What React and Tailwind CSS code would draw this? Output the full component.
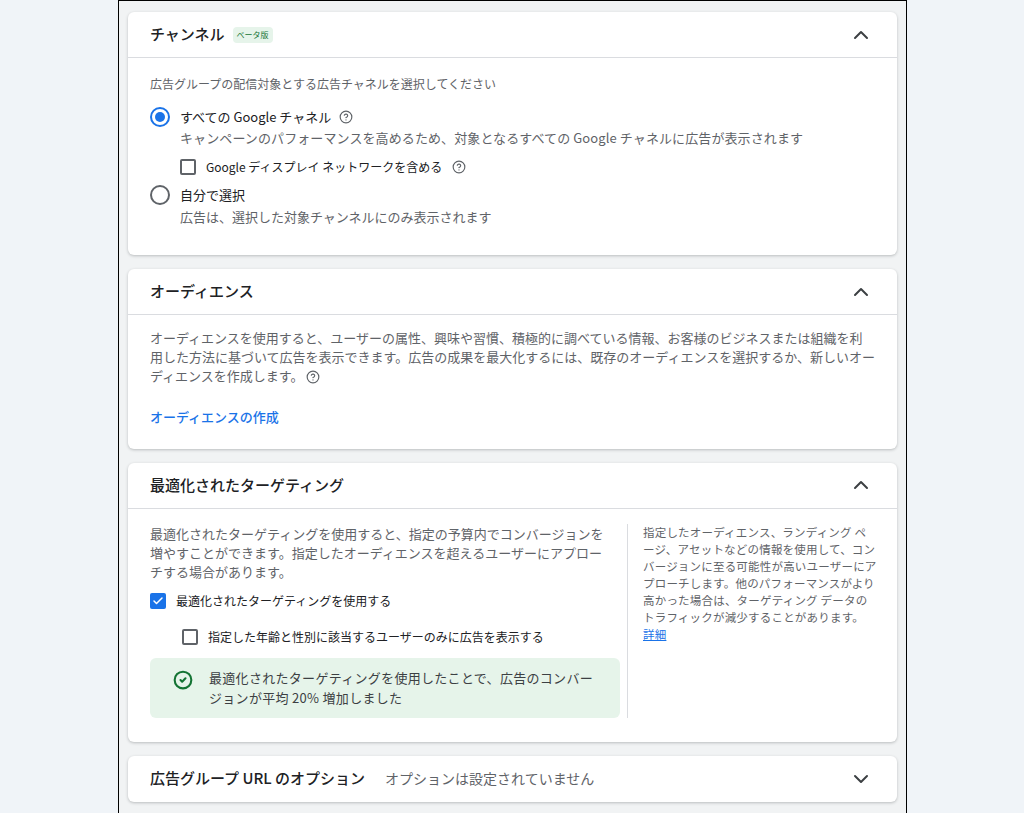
import { ChevronUp, ChevronDown, Check, CircleCheck, CircleHelp } from 'lucide-react';

const Header = ({ children, open = true }) => (
  <div className={`flex items-center justify-between h-[46px] pl-[22px] pr-[24px] ${open ? 'border-b border-[#dadce0]' : ''}`}>
    <div className="flex items-center">{children}</div>
    {open ? <ChevronUp className="w-6 h-6 text-[#3c4043]" /> : <ChevronDown className="w-6 h-6 text-[#3c4043]" />}
  </div>
);

const Help = () => <CircleHelp className="w-[14px] h-[14px] text-[#5f6368] inline-block" strokeWidth={2} />;

export default function App() {
  return (
    <div className="min-h-[813px] bg-[#f0f4f8] text-[#3c4043]" style={{ fontFamily: '"Noto Sans CJK JP", "Noto Sans", sans-serif' }}>
      <div className="w-[789px] ml-[118px] min-h-[813px] bg-[#f1f3f4] border-x border-t border-black px-[9px] pt-[11px] flex flex-col gap-[14px]">
        {/* Channel */}
        <div className="bg-white rounded-md shadow-[0_1px_3px_rgba(60,64,67,0.3)]">
          <Header>
            <span className="text-[15px] font-medium text-[#202124]">チャンネル</span>
            <span className="ml-2 bg-[#e6f4ea] text-[#137333] text-[8px] px-1 py-[2px] rounded-sm">ベータ版</span>
          </Header>
          <div className="pl-[22px] pt-[15px] pb-[28px] text-[13px] leading-[21px]">
            <p className="text-[12px] text-[#5f6368]">広告グループの配信対象とする広告チャネルを選択してください</p>
            <div className="mt-[12px] flex items-start gap-[10px]">
              <span className="mt-[1px] w-[20px] h-[20px] rounded-full border-2 border-[#1a73e8] flex items-center justify-center">
                <span className="w-[10px] h-[10px] rounded-full bg-[#1a73e8]" />
              </span>
              <div>
                <div className="flex items-center gap-2 text-[#202124]">すべての Google チャネル <Help /></div>
                <div className="text-[#5f6368] tracking-[0.1px]">キャンペーンのパフォーマンスを高めるため、対象となるすべての Google チャネルに広告が表示されます</div>
                <div className="mt-[8px] flex items-center gap-[10px] text-[12px] text-[#202124]">
                  <span className="w-[16px] h-[16px] border-2 border-[#5f6368] rounded-[2px]" />
                  Google ディスプレイ ネットワークを含める <Help />
                </div>
              </div>
            </div>
            <div className="mt-[7px] flex items-start gap-[10px]">
              <span className="mt-[1px] w-[20px] h-[20px] rounded-full border-2 border-[#5f6368]" />
              <div>
                <div className="text-[#202124]">自分で選択</div>
                <div className="text-[#5f6368] mt-[1px]">広告は、選択した対象チャンネルにのみ表示されます</div>
              </div>
            </div>
          </div>
        </div>

        {/* Audience */}
        <div className="bg-white rounded-md shadow-[0_1px_3px_rgba(60,64,67,0.3)]">
          <Header><span className="text-[15px] font-medium text-[#202124]">オーディエンス</span></Header>
          <div className="px-[22px] pt-[13px] pb-[22px] text-[13px]">
            <p className="text-[#5f6368] leading-[19px]">オーディエンスを使用すると、ユーザーの属性、興味や習慣、積極的に調べている情報、お客様のビジネスまたは組織を利用した方法に基づいて広告を表示できます。広告の成果を最大化するには、既存のオーディエンスを選択するか、新しいオーディエンスを作成します。 <Help /></p>
            <div className="mt-[22px] text-[#1a73e8] font-medium">オーディエンスの作成</div>
          </div>
        </div>

        {/* Optimized targeting */}
        <div className="bg-white rounded-md shadow-[0_1px_3px_rgba(60,64,67,0.3)]">
          <Header><span className="text-[15px] font-medium text-[#202124]">最適化されたターゲティング</span></Header>
          <div className="flex pl-[22px] pt-[15px] pb-[24px]">
            <div className="w-[470px] text-[13px]">
              <p className="text-[#5f6368] leading-[19px] w-[462px]">最適化されたターゲティングを使用すると、指定の予算内でコンバージョンを増やすことができます。指定したオーディエンスを超えるユーザーにアプローチする場合があります。</p>
              <div className="mt-[11px] flex items-center gap-[10px] text-[12px] text-[#202124]">
                <span className="w-[16px] h-[16px] bg-[#1a73e8] rounded-[2px] flex items-center justify-center"><Check className="w-3 h-3 text-white" strokeWidth={3} /></span>
                最適化されたターゲティングを使用する
              </div>
              <div className="mt-[18px] ml-[32px] flex items-center gap-[10px] text-[12px] text-[#202124]">
                <span className="w-[16px] h-[16px] border-2 border-[#5f6368] rounded-[2px]" />
                指定した年齢と性別に該当するユーザーのみに広告を表示する
              </div>
              <div className="mt-[12px] bg-[#e6f4ea] rounded-md flex items-start gap-[16px] pl-[23px] pr-[24px] py-[10px]">
                <CircleCheck className="w-[20px] h-[20px] text-[#137333] mt-[2px] shrink-0" strokeWidth={2.5} />
                <p className="text-[#3c4043] leading-[20px] text-[13px] tracking-[0.3px]">最適化されたターゲティングを使用したことで、広告のコンバージョンが平均 20% 増加しました</p>
              </div>
            </div>
            <div className="ml-[7px] border-l border-[#dadce0] pl-[15px] w-[250px] text-[11.5px] text-[#5f6368] leading-[17px] tracking-[0.2px]">
              指定したオーディエンス、ランディング ページ、アセットなどの情報を使用して、コンバージョンに至る可能性が高いユーザーにアプローチします。他のパフォーマンスがより高かった場合は、ターゲティング データのトラフィックが減少することがあります。 <span className="text-[#1a73e8] underline">詳細</span>
            </div>
          </div>
        </div>

        {/* URL options */}
        <div className="bg-white rounded-md shadow-[0_1px_3px_rgba(60,64,67,0.3)]">
          <Header open={false}>
            <span className="text-[15px] font-medium text-[#202124]">広告グループ URL のオプション</span>
            <span className="ml-[20px] text-[14px] text-[#5f6368]">オプションは設定されていません</span>
          </Header>
        </div>
      </div>
    </div>
  );
}
